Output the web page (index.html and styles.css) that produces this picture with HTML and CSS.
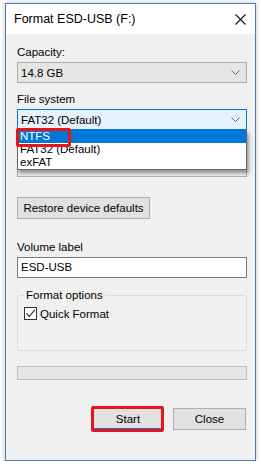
FILE: index.html
```html
<!DOCTYPE html>
<html lang="en">
<head>
  <meta charset="UTF-8">
  <title>Format ESD-USB (F:)</title>
  <link rel="stylesheet" href="styles.css">
</head>
<body>
  <div class="window">
    <div class="titlebar">
      <span class="title">Format ESD-USB (F:)</span>
      <svg class="close" width="11" height="11" viewBox="0 0 11 11">
        <path d="M0.5 0.5 L10.5 10.5 M10.5 0.5 L0.5 10.5" stroke="#111" stroke-width="1.1" fill="none"/>
      </svg>
    </div>

    <div class="content">
      <div class="label first">Capacity:</div>
      <div class="combo">
        <span>14.8 GB</span>
        <svg class="chev" width="9" height="5" viewBox="0 0 9 5"><path d="M0.5 0.5 L4.5 4.5 L8.5 0.5" stroke="#666" fill="none"/></svg>
      </div>

      <div class="label">File system</div>
      <div class="fs-wrap">
        <div class="combo open">
          <span>FAT32 (Default)</span>
          <svg class="chev" width="9" height="5" viewBox="0 0 9 5"><path d="M0.5 0.5 L4.5 4.5 L8.5 0.5" stroke="#666" fill="none"/></svg>
        </div>
        <!-- allocation unit row, hidden under the open list -->
        <div class="label"></div>
        <div class="combo"></div>

        <ul class="dropdown">
          <li class="selected">NTFS</li>
          <li>FAT32 (Default)</li>
          <li>exFAT</li>
        </ul>
        <div class="mark mark-ntfs"></div>
      </div>

      <button class="btn restore">Restore device defaults</button>

      <div class="label gap">Volume label</div>
      <div class="textbox">ESD-USB</div>

      <fieldset class="group">
        <legend>Format options</legend>
        <label class="check">
          <span class="box">
            <svg width="11" height="11" viewBox="0 0 11 11"><path d="M1.5 5.5 L4.3 8.5 L9.8 1.8" stroke="#222" stroke-width="1.1" fill="none"/></svg>
          </span>
          Quick Format
        </label>
      </fieldset>

      <div class="progress"></div>

      <div class="footer">
        <button class="btn start">Start</button>
        <button class="btn close-btn">Close</button>
        <div class="mark mark-start"></div>
      </div>
    </div>
  </div>
</body>
</html>
```

FILE: styles.css
```css
body {
  margin: 0;
  background: #fff;
  font-family: "Liberation Sans", Arial, sans-serif;
  font-size: 11.5px;
  color: #000;
}

.window {
  margin: 3px 0 0 5px;
  width: 251px;
  height: 458px;
  box-sizing: border-box;
  border: 1px solid #4a7cb3;
  background: #f0f0f0;
  box-shadow: 0 0 5px rgba(0,0,0,0.25);
  display: flex;
  flex-direction: column;
}

.titlebar {
  height: 30px;
  flex: none;
  background: #fff;
  display: flex;
  align-items: center;
  justify-content: space-between;
  padding: 0 9px 0 8px;
}
.title {
  font-size: 12.5px;
}
.close {
  display: block;
}

.content {
  padding: 0 8px 0 11px;
  display: flex;
  flex-direction: column;
}

.label {
  height: 16px;
  flex: none;
  line-height: 16px;
  margin: 8px 0 2px;
}
.label.first {
  margin-top: 10px;
}
.label.gap {
  margin-top: 20px;
}

.combo {
  height: 21px;
  flex: none;
  box-sizing: border-box;
  border: 1px solid #adadad;
  background: #e5e5e5;
  display: flex;
  align-items: center;
  justify-content: space-between;
  padding: 0 6px 0 3px;
}
.combo.open {
  background: #e5f1fb;
  border-color: #0078d7;
}

.fs-wrap {
  position: relative;
  display: flex;
  flex-direction: column;
}

.dropdown {
  position: absolute;
  top: 21px;
  left: 0;
  width: 230px;
  margin: 0;
  padding: 0;
  list-style: none;
  background: #fff;
  border: 1px solid #646464;
  border-top: none;
  box-sizing: border-box;
  box-shadow: 2px 3px 3px rgba(0,0,0,0.35);
}
.dropdown li {
  height: 13px;
  line-height: 13px;
  padding-left: 2px;
}
.dropdown li.selected {
  background: #0078d7;
  color: #fff;
}

.mark {
  position: absolute;
  border: 3px solid #e8141c;
  border-radius: 2px;
  box-sizing: border-box;
}
.mark-ntfs {
  left: -1px;
  top: 19px;
  width: 55px;
  height: 19px;
}

.btn {
  font: inherit;
  color: #000;
  background: #e1e1e1;
  border: 1px solid #adadad;
  height: 22px;
  padding: 0;
}
.restore {
  align-self: flex-start;
  width: 133px;
  margin-top: 20px;
}

.textbox {
  height: 21px;
  box-sizing: border-box;
  border: 1px solid #7a7a7a;
  background: #fff;
  line-height: 19px;
  padding-left: 3px;
}

.group {
  margin: 11px 0 0;
  padding: 6px 6px 0;
  height: 62px;
  box-sizing: border-box;
  border: 1px solid #dcdcdc;
  border-radius: 2px;
}
.group legend {
  padding: 0 2px;
  margin-left: 0;
}

.check {
  display: flex;
  align-items: center;
  gap: 3px;
}
.box {
  width: 13px;
  height: 13px;
  box-sizing: border-box;
  border: 1px solid #333;
  background: #fff;
  display: flex;
  align-items: center;
  justify-content: center;
}
.box svg {
  display: block;
}

.progress {
  margin-top: 15px;
  height: 14px;
  box-sizing: border-box;
  border: 1px solid #bcbcbc;
  background: #e6e6e6;
}

.footer {
  position: relative;
  margin-top: 28px;
  display: flex;
  justify-content: flex-end;
  gap: 10px;
  padding-right: 1px;
}
.start {
  width: 70px;
  border-color: #0078d7;
  border-width: 1px 1px 2px;
}
.close-btn {
  width: 73px;
}
.mark-start {
  left: 74px;
  top: -2px;
  width: 73px;
  height: 26px;
}
```
